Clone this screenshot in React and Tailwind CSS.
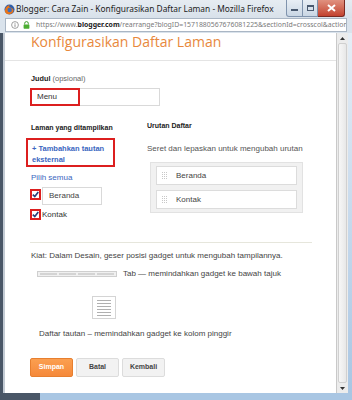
import React from "react";

const sans = { fontFamily: '"Liberation Sans", Arial, sans-serif' };

const FirefoxLogo = () => (
  <svg width="11" height="11" viewBox="0 0 12 12">
    <circle cx="6" cy="6" r="5.5" fill="#2f5ea8" />
    <path d="M1 7.5 C1.5 3 4 1.2 6.5 1 C5 2.2 5.5 3.4 7 3.8 C9.5 4.2 10.6 6 10.3 8 C9.5 10.5 7 11.6 4.6 11.2 C2.6 10.7 1.2 9.4 1 7.5 Z" fill="#e8751a" />
    <circle cx="6.2" cy="6.6" r="2.4" fill="#3a6fbf" />
  </svg>
);

const WindowButtons = () => (
  <div className="absolute right-[7px] top-0 flex">
    <div className="w-[17px] h-[17px] flex items-end justify-center pb-[5px] rounded-bl-[3px] border border-t-0 border-[#7f93ad] bg-gradient-to-b from-[#e8eef5] to-[#c9d6e4]">
      <div className="w-[7px] h-[2px] bg-[#4a5a70]" />
    </div>
    <div className="w-[15px] h-[17px] flex items-center justify-center border border-t-0 border-l-0 border-[#7f93ad] bg-gradient-to-b from-[#e8eef5] to-[#c9d6e4]">
      <div className="w-[7px] h-[6px] border border-t-2 border-[#4a5a70]" />
    </div>
    <div className="w-[27px] h-[17px] flex items-center justify-center rounded-br-[3px] border border-t-0 border-l-0 border-[#7a2a22] bg-gradient-to-b from-[#e0917f] to-[#c2412f]">
      <svg width="9" height="8" viewBox="0 0 9 8">
        <path d="M1 1 L8 7 M8 1 L1 7" stroke="#fff" strokeWidth="2" />
      </svg>
    </div>
  </div>
);

const Handle = () => (
  <svg width="6" height="8" viewBox="0 0 6 8" className="shrink-0">
    {[0, 1, 2].map((c) =>
      [0, 1, 2, 3].map((r) => (
        <rect key={c + "-" + r} x={c * 2} y={r * 2} width="1" height="1" fill="#c8c8c8" />
      ))
    )}
  </svg>
);

const CheckMark = () => (
  <div className="w-[11px] h-[11px] border-2 border-[#dc1f1f] bg-white flex items-center justify-center shrink-0">
    <svg width="7" height="7" viewBox="0 0 7 7">
      <path d="M0.8 3.6 L2.8 5.6 L6.3 1" stroke="#2a3f78" strokeWidth="1.6" fill="none" />
    </svg>
  </div>
);

const OrderItem = ({ label }) => (
  <div className="h-[19px] bg-white border border-[#dcdcdc] flex items-center gap-[8px] pl-[5px] text-[8px] text-[#444]">
    <Handle />
    <span>{label}</span>
  </div>
);

export default function App() {
  return (
    <div className="w-[352px] h-[400px] flex flex-col overflow-hidden bg-[#d6e0ea]" style={sans}>
      {/* Title bar */}
      <div className="relative h-[18px] shrink-0 flex items-center bg-gradient-to-b from-[#e6ecf2] to-[#d8e1ea]">
        <div className="ml-[4px] mt-[1px]">
          <FirefoxLogo />
        </div>
        <span
          className="ml-[1px] text-[8.35px] text-[#1c1c1c] whitespace-nowrap"
          style={{ fontFamily: '"Noto Sans", "Open Sans", sans-serif' }}
        >
          Blogger: Cara Zain - Konfigurasikan Daftar Laman - Mozilla Firefox
        </span>
        <WindowButtons />
      </div>

      {/* URL bar */}
      <div className="h-[15px] shrink-0 px-[5px] bg-[#dae3ec]">
        <div className="h-[14px] bg-white border border-[#aab6c4] flex items-center overflow-hidden">
          <svg width="8" height="8" viewBox="0 0 8 8" className="ml-[5px] shrink-0">
            <circle cx="4" cy="4" r="3.4" fill="none" stroke="#888" strokeWidth="0.8" />
            <rect x="3.6" y="3.3" width="0.8" height="2.6" fill="#777" />
            <rect x="3.6" y="1.9" width="0.8" height="0.8" fill="#777" />
          </svg>
          <svg width="7" height="8" viewBox="0 0 7 8" className="ml-[4px] shrink-0">
            <path d="M1.7 3.5 V2.4 A1.8 1.8 0 0 1 5.3 2.4 V3.5" stroke="#3d9a2c" strokeWidth="1" fill="none" />
            <rect x="0.6" y="3.5" width="5.8" height="4.2" rx="0.6" fill="#4cae32" />
          </svg>
          <span
            className="ml-[6px] text-[6.9px] text-[#7a7a7a] whitespace-nowrap"
            style={{ fontFamily: '"Noto Sans", "Open Sans", sans-serif' }}
          >
            https://www.<span className="font-bold text-[#222]">blogger.com</span>
            /rearrange?blogID=1571880567676081225&amp;sectionId=crosscol&amp;action
          </span>
        </div>
      </div>

      {/* Main */}
      <div className="flex-1 flex min-h-0">
        <div className="w-[5px] flex">
          <div className="w-[3px] bg-[#4a5767]" />
          <div className="w-[2px] bg-[#c3cbd4]" />
        </div>

        <div className="w-[331px] bg-white flex flex-col">
          <div className="h-[28px] shrink-0 border-b border-[#e4e4e4] pl-[26px]">
            <h1
              className="text-[14px] leading-[18px] text-[#e8883c]"
              style={{ fontFamily: '"Open Sans", "Noto Sans", sans-serif' }}
            >
              Konfigurasikan Daftar Laman
            </h1>
          </div>

          <div className="pl-[25px] pr-[24px] text-[#333]">
            <div className="mt-[13px] text-[7.3px] leading-[10px] pl-[1px]">
              <span className="font-bold text-[#222]">Judul</span>{" "}
              <span className="text-[#666] text-[7.5px]">(opsional)</span>
            </div>

            <div className="mt-[4px] w-[130px] h-[18px] border border-[#d9d9d9] flex">
              <div className="w-[50px] h-[18px] -mt-px -ml-px border-2 border-[#dc1f1f] flex items-center pl-[5px] text-[8px] text-[#333]">
                Menu
              </div>
            </div>

            <div className="mt-[17px] flex">
              {/* Left column */}
              <div className="w-[117px] shrink-0">
                <div className="text-[7px] leading-[10px] font-bold text-[#222] pl-[1px]">
                  Laman yang ditampilkan
                </div>
                <div className="mt-[5px] -ml-[4px] w-[89px] border-2 border-[#dc1f1f] pl-[4px] pt-[3px] text-[7.5px] leading-[11px] font-bold text-[#3a66c0]">
                  + Tambahkan tautan
                  <br />
                  eksternal
                </div>
                <div className="mt-[6px] text-[8px] leading-[10px] text-[#3a66c0] pl-[1px]">
                  Pilih semua
                </div>
                <div className="mt-[4px] flex items-start gap-[1px]">
                  <div className="mt-[2px]">
                    <CheckMark />
                  </div>
                  <div className="w-[60px] h-[18px] border border-[#d9d9d9] flex items-center pl-[6px] text-[8px] text-[#444]">
                    Beranda
                  </div>
                </div>
                <div className="mt-[4px] flex items-center gap-[1px] h-[11px]">
                  <CheckMark />
                  <span className="text-[8px] text-[#333]">Kontak</span>
                </div>
              </div>

              {/* Right column */}
              <div className="w-[156px]">
                <div className="text-[7px] leading-[10px] font-bold text-[#222] -mt-[2px]">
                  Urutan Daftar
                </div>
                <div className="mt-[13px] text-[8px] leading-[10px] text-[#555]">
                  Seret dan lepaskan untuk mengubah urutan
                </div>
                <div className="mt-[8px] ml-[3px] w-[153px] bg-[#f1f1f1] border border-[#e2e2e2] px-[5px] pt-[3px] pb-[3px] flex flex-col gap-[5px]">
                  <OrderItem label="Beranda" />
                  <OrderItem label="Kontak" />
                </div>
              </div>
            </div>

            <div className="mt-[22px] h-px bg-[#e6e6dc]" />

            <div className="mt-[8px] text-[8px] leading-[10px] text-[#444] pl-[1px]">
              Kiat: Dalam Desain, geser posisi gadget untuk mengubah tampilannya.
            </div>

            <div className="mt-[8px] flex items-center h-[10px]">
              <div className="ml-[7px] w-[80px] h-[6px] bg-[#f0f0f0] border border-[#cfcfcf] flex gap-[2px] px-[2px] items-center">
                <div className="flex-1 h-[2px] bg-[#d4d4d4]" />
                <div className="flex-1 h-[2px] bg-[#d4d4d4]" />
                <div className="flex-1 h-[2px] bg-[#d4d4d4]" />
                <div className="flex-1 h-[2px] bg-[#d4d4d4]" />
              </div>
              <span className="ml-[6px] text-[8px] text-[#444]">
                Tab — memindahkan gadget ke bawah tajuk
              </span>
            </div>

            <div className="mt-[17px] ml-[62px] w-[24px] h-[23px] border border-[#d4d4d4] bg-white flex flex-col gap-[2px] px-[4px] pt-[3px]">
              {[0, 1, 2, 3, 4, 5].map((i) => (
                <div key={i} className="h-px bg-[#b0b0b0]" />
              ))}
            </div>

            <div className="mt-[10px] ml-[9px] text-[8px] leading-[10px] text-[#444]">
              Daftar tautan – memindahkan gadget ke kolom pinggir
            </div>

            <div className="mt-[19px] flex gap-[3px] text-[7px] font-bold">
              <button className="w-[43px] h-[19px] rounded-[2px] bg-gradient-to-b from-[#fb9f50] to-[#f5893a] border border-[#e77f2f] text-white">
                Simpan
              </button>
              <button className="w-[43px] h-[19px] rounded-[2px] bg-[#f2f2f2] border border-[#dcdcdc] text-[#444]">
                Batal
              </button>
              <button className="w-[43px] h-[19px] rounded-[2px] bg-[#f2f2f2] border border-[#dcdcdc] text-[#444]">
                Kembali
              </button>
            </div>
          </div>
        </div>

        {/* Scrollbar */}
        <div className="w-[12px] flex flex-col border-l border-[#c9c9c9] bg-[#ececec]">
          <div className="h-[10px] flex items-center justify-center">
            <svg width="5" height="3" viewBox="0 0 5 3">
              <path d="M0 3 L2.5 0 L5 3 Z" fill="#333" />
            </svg>
          </div>
          <div className="flex-1 mx-[1px] rounded-[2px] border border-[#d0d0d0] bg-gradient-to-r from-[#f7f7f7] to-[#e8e8e8]" />
          <div className="h-[10px] flex items-center justify-center">
            <svg width="5" height="3" viewBox="0 0 5 3">
              <path d="M0 0 L2.5 3 L5 0 Z" fill="#333" />
            </svg>
          </div>
        </div>

        <div className="w-[4px] bg-gradient-to-b from-[#e6eef6] to-[#a9c6e3]" />
      </div>

      {/* Bottom frame */}
      <div className="h-[7px] shrink-0 flex">
        <div className="w-[40px] bg-[#4a5767]" />
        <div className="flex-1 bg-[#a9c6e3]" />
      </div>
    </div>
  );
}
